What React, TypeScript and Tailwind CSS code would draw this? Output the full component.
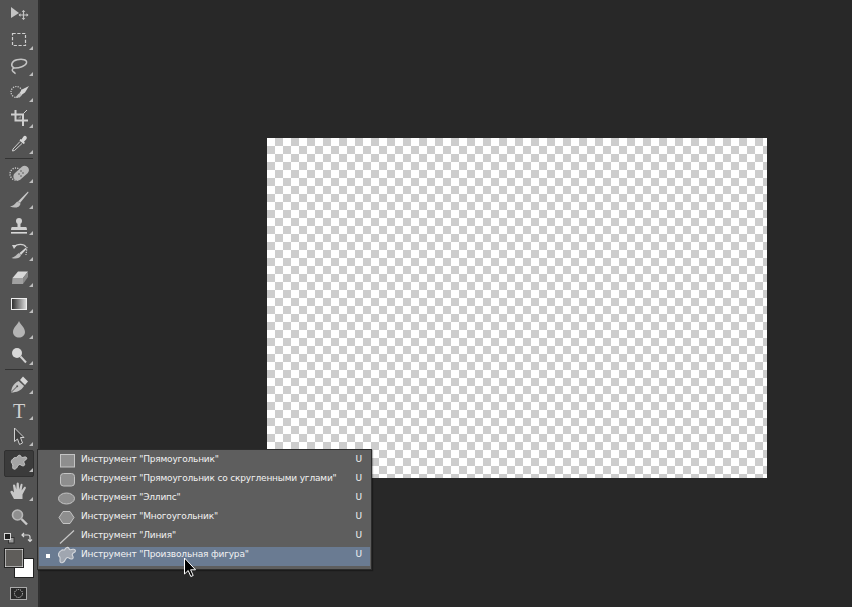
import React from "react";

const C = "#c4c4c4";

const Blob = ({ fill = "#a4a4a4", stroke = "#cccccc" }: { fill?: string; stroke?: string }) => (
  <path
    d="M14 9 C15 8 16.5 9 17 8.5 C17.5 6 20.5 5.5 21 7.5 C21.3 8.8 23 8.5 24.5 8 C27 7.5 27.5 10 25.5 11 C23.5 12 23.5 13 24.5 14.5 C25.5 17 22.5 17.5 21 16 C19.5 15 18.5 15.5 17.5 17.5 C16.5 20 14 21 13 19.5 C12 18 13.5 16.5 12.5 15 C10.5 13.5 11 11 14 9 Z"
    fill={fill}
    stroke={stroke}
    strokeWidth="1"
  />
);

type Tool = { k: string; tri?: boolean; active?: boolean; art: React.ReactNode };

const g1: Tool[] = [
  {
    k: "move",
    art: (
      <>
        <path d="M11 6 L19 12 L11 17 Z" fill={C} />
        <path d="M23.5 9.5 V18.5 M19 14 H28" stroke={C} strokeWidth="1.2" />
        <path d="M23.5 9 l-1.8 2 h3.6 Z M23.5 19 l-1.8 -2 h3.6 Z M18.5 14 l2 -1.8 v3.6 Z M28.5 14 l-2 -1.8 v3.6 Z" fill={C} />
      </>
    ),
  },
  {
    k: "marquee",
    tri: true,
    art: <rect x="12.5" y="6.5" width="13" height="12" fill="none" stroke="#d0d0d0" strokeWidth="1.2" strokeDasharray="3.2 1.6" />,
  },
  {
    k: "lasso",
    tri: true,
    art: (
      <path
        d="M14 15 C10 12.5 11.5 8 17 6.8 C22.5 5.6 27.5 6.8 26.5 10 C25.5 13.2 19 15.2 14.5 15 C12.5 15 11.5 17 13 18.5 C14 19.5 15.5 19.5 15 21"
        fill="none"
        stroke={C}
        strokeWidth="1.5"
      />
    ),
  },
  {
    k: "quick",
    tri: true,
    art: (
      <>
        <circle cx="16.5" cy="13" r="5.5" fill="none" stroke="#d0d0d0" strokeWidth="1.2" strokeDasharray="1.2 1.2" />
        <path d="M29 7 L22 10.5 L19.5 14 L21.5 16 L25 13.5 Z" fill="#d4d4d4" />
        <path d="M19.5 14 C17.5 15 17.5 17 15 18.5 C18 19 21 18.5 21.5 16 Z" fill="#bcbcbc" />
      </>
    ),
  },
  {
    k: "crop",
    tri: true,
    art: (
      <>
        <path d="M11 9.5 H23 V21 M15.5 5 V15.5 H28" fill="none" stroke="#cfcfcf" strokeWidth="2" />
        <path d="M17.5 13.5 L21 10.5 V13.5 Z" fill="#888" />
        <path d="M23.5 8.5 L27 5" stroke="#cfcfcf" strokeWidth="1" />
      </>
    ),
  },
  {
    k: "dropper",
    tri: true,
    art: (
      <>
        <path d="M21.5 8.5 L23.5 5.5 C25 3.8 27.8 5.8 26.5 8 L24 10.8 L25 12 L23.5 13 L19.5 9.5 L20.5 8 Z" fill="#d6d6d6" />
        <path d="M20 10.5 L13 18 L12.5 20 L14.5 19.5 L22 12.5" fill="#555" stroke="#d0d0d0" strokeWidth="1" />
      </>
    ),
  },
];

const g2: Tool[] = [
  {
    k: "heal",
    tri: true,
    art: (
      <>
        <circle cx="16" cy="14" r="6" fill="none" stroke="#d0d0d0" strokeWidth="1.3" strokeDasharray="1.2 1.2" />
        <rect x="-9" y="-4" width="18" height="8.5" rx="4.2" transform="translate(21 13) rotate(-42)" fill="#b8b8b8" />
        <circle cx="21" cy="11" r="0.8" fill="#555" />
        <circle cx="23" cy="13" r="0.8" fill="#555" />
        <circle cx="19" cy="14" r="0.8" fill="#555" />
        <circle cx="21" cy="16" r="0.8" fill="#555" />
      </>
    ),
  },
  {
    k: "brush",
    tri: true,
    art: (
      <>
        <path d="M28 5.5 L18 15.5 L20 17 L28.5 6.5 Z" fill="#c8c8c8" />
        <path d="M17.5 15.5 C15.5 16.5 15 19.5 10 20.5 C14 22.5 20 22 20.5 17.5 Z" fill="#bdbdbd" />
      </>
    ),
  },
  {
    k: "stamp",
    tri: true,
    art: (
      <>
        <circle cx="19" cy="9" r="3" fill="#cfcfcf" />
        <path d="M17.5 10 H20.5 V15 H26 Q27 15 27 18 H11 Q11 15 12 15 H17.5 Z" fill="#cfcfcf" />
        <rect x="11" y="20" width="16" height="1.6" fill="#d8d8d8" />
      </>
    ),
  },
  {
    k: "history",
    tri: true,
    art: (
      <>
        <path d="M14 9 C17 5.5 24 5.5 26 9" fill="none" stroke="#d0d0d0" strokeWidth="1.4" />
        <path d="M12 7 L17 7 L14 11 Z" fill="#d0d0d0" />
        <path d="M27 9 L26 17" stroke="#d0d0d0" strokeWidth="1.2" strokeDasharray="1.2 1.2" />
        <path d="M26 9.5 L19.5 15 L21 17 L26.5 11 Z" fill="#d4d4d4" />
        <path d="M19 15 C17 16 16 18.5 11.5 20 C15 21 20 21 21 17 Z" fill="#bcbcbc" />
      </>
    ),
  },
  {
    k: "eraser",
    tri: true,
    art: (
      <>
        <path d="M18 7.5 H28 L23 14 H12.5 Z" fill="#d8d8d8" />
        <path d="M12.5 14 H23 V20 H12 Z" fill="#a0a0a0" />
        <path d="M23 14 L28 7.5 V13 L23 20 Z" fill="#8a8a8a" />
      </>
    ),
  },
  {
    k: "gradient",
    tri: true,
    art: (
      <>
        <defs>
          <linearGradient id="grad">
            <stop offset="0" stopColor="#2a2a2a" />
            <stop offset="1" stopColor="#e0e0e0" />
          </linearGradient>
        </defs>
        <rect x="11.5" y="8.5" width="15" height="11" fill="url(#grad)" stroke="#eee" strokeWidth="1" />
      </>
    ),
  },
  {
    k: "drop",
    tri: true,
    art: <path d="M19 5 C20.5 9 25 11.5 25 16 C25 19.5 22 21.5 19 21.5 C16 21.5 13 19.5 13 16 C13 11.5 17.5 9 19 5 Z" fill="#b4b4b4" />,
  },
  {
    k: "dodge",
    tri: true,
    art: (
      <>
        <circle cx="17" cy="11" r="5" fill="#d8d8d8" />
        <path d="M20.5 14.5 L26 20.5" stroke="#d0d0d0" strokeWidth="2" />
      </>
    ),
  },
];

const g3: Tool[] = [
  {
    k: "pen",
    tri: true,
    art: (
      <>
        <path d="M11 21.5 C11.5 16.5 13.5 12.5 18.5 10 L24 15 C21.5 19.5 16.5 21.5 11 21.5 Z" fill="#c4c4c4" />
        <path d="M11 21.5 L17 15.5" stroke="#555" strokeWidth="1" />
        <circle cx="17.2" cy="15.3" r="1" fill="#555" />
        <path d="M20 9 L23 5.5 L28 10.5 L25 14 Z" fill="#d6d6d6" />
      </>
    ),
  },
  {
    k: "type",
    tri: true,
    art: (
      <text x="19" y="21" textAnchor="middle" fontFamily="'Liberation Serif', serif" fontSize="20" fill="#d0d0d0">
        T
      </text>
    ),
  },
  {
    k: "path",
    tri: true,
    art: <path d="M14.5 5 L24 14.5 H20.5 L22.5 20 L19.5 21.5 L17.5 16 L14.5 18.5 Z" fill="#3f3f3f" stroke="#d0d0d0" strokeWidth="1" />,
  },
  {
    k: "shape",
    tri: true,
    active: true,
    art: <Blob />,
  },
];

const g4: Tool[] = [
  {
    k: "hand",
    tri: true,
    art: (
      <path
        d="M14 21 L10.5 14.5 C10 13 11.5 12.2 12.5 13 L14 14.5 L13 7.5 C13 6.2 14.8 6 15.2 7.2 L16.3 11.5 L16.6 5.5 C16.8 4 18.6 4 18.8 5.5 L19.2 11.5 L20.6 6.5 C21 5.2 22.8 5.6 22.5 7 L21.6 12.5 L24 9.2 C24.8 8.2 26.3 9 25.8 10.3 L22.5 16.5 V21 Z"
        fill="#c8c8c8"
      />
    ),
  },
  {
    k: "zoom",
    art: (
      <>
        <circle cx="17.5" cy="11" r="5" fill="#8f8f8f" stroke="#b8b8b8" strokeWidth="1.6" />
        <path d="M21.5 15 L27 20.5" stroke="#c8c8c8" strokeWidth="2.4" />
      </>
    ),
  },
];

function ToolRow({ t }: { t: Tool }) {
  return (
    <div className="relative h-[26px] w-full">
      {t.active && <div className="absolute inset-x-[4px] top-[1px] h-[27px] rounded-[2px] border border-[#303030] bg-[#3b3b3b]" />}
      <svg width="38" height="26" viewBox="0 0 38 26" className="relative block overflow-visible">
        {t.art}
        {t.tri && <path d="M33 19 V23 H29 Z" fill="#bdbdbd" />}
      </svg>
    </div>
  );
}

const Sep = () => <div className="mx-[5px] my-[1px] h-px bg-[#333333]" />;

const items: { label: string; icon: React.ReactNode; sel?: boolean }[] = [
  {
    label: 'Инструмент "Прямоугольник"',
    icon: <rect x="2.5" y="2.5" width="14" height="12.5" fill="#8e8e8e" stroke="#c4c4c4" />,
  },
  {
    label: 'Инструмент "Прямоугольник со скругленными углами"',
    icon: <rect x="2.5" y="2.5" width="14" height="12.5" rx="3" fill="#8e8e8e" stroke="#c4c4c4" />,
  },
  {
    label: 'Инструмент "Эллипс"',
    icon: <ellipse cx="8.5" cy="8.5" rx="8" ry="5.5" fill="#8e8e8e" stroke="#c4c4c4" />,
  },
  {
    label: 'Инструмент "Многоугольник"',
    icon: <path d="M5 2.5 H12 L16 8.5 L12 14.5 H5 L1 8.5 Z" fill="#8e8e8e" stroke="#c4c4c4" />,
  },
  {
    label: 'Инструмент "Линия"',
    icon: <path d="M2 15.5 L16 2.5" stroke="#c8c8c8" strokeWidth="1.2" />,
  },
  {
    label: 'Инструмент "Произвольная фигура"',
    sel: true,
    icon: (
      <g transform="translate(-12 -6.5) scale(1.1)">
        <Blob fill="#a0a6b0" stroke="#d4d7dc" />
      </g>
    ),
  },
];

function FlyoutMenu() {
  return (
    <div className="absolute left-[37px] top-[449px] z-10 w-[335px] border border-[#2c2c2c] bg-[#5e5e5e] px-[1px] pt-[2px] pb-[3px] shadow-[1px_1px_1px_rgba(0,0,0,0.3)]">
      <div className="flex flex-col">
        {items.map((it) => (
          <div key={it.label} className={`flex h-[19px] items-center ${it.sel ? "bg-[#6a7b92]" : ""}`}>
            <div className="flex w-[17px] justify-center">
              {it.sel && <div className="mb-[2px] h-[4px] w-[4px] bg-white" />}
            </div>
            <svg width="20" height="19" viewBox="0 0 20 19" className="ml-[2px] block overflow-visible">
              {it.icon}
            </svg>
            <span className="ml-[3px] flex-1 whitespace-nowrap pb-[4px] font-['DejaVu_Sans',sans-serif] text-[9px] leading-none tracking-[-0.18px] text-[#f2f2f2]">
              {it.label}
            </span>
            <span className="mr-[8px] pb-[4px] font-['DejaVu_Sans',sans-serif] text-[9px] leading-none text-[#f2f2f2]">U</span>
          </div>
        ))}
      </div>
    </div>
  );
}

export default function App() {
  return (
    <div className="relative flex h-[607px] w-[852px] overflow-hidden bg-[#282828]">
      <aside className="flex h-full w-[38px] shrink-0 flex-col bg-[#535353] pt-[1px]">
        {g1.map((t) => <ToolRow key={t.k} t={t} />)}
        <Sep />
        {g2.map((t) => <ToolRow key={t.k} t={t} />)}
        <Sep />
        {g3.map((t) => <ToolRow key={t.k} t={t} />)}
        <Sep />
        {g4.map((t) => <ToolRow key={t.k} t={t} />)}
        <svg width="38" height="76" viewBox="0 0 38 76" className="block">
          <rect x="8.5" y="7.5" width="5.5" height="5.5" fill="#9a9a9a" stroke="#333" />
          <rect x="4.5" y="3.5" width="6" height="6" fill="#222" stroke="#d8d8d8" />
          <path d="M24 3 L22 5 L24 7 M22.5 5 H28 Q30 5 30 7 V11 M28 9.5 L30 11.5 L32 9.5" fill="none" stroke="#d8d8d8" strokeWidth="1.2" />
          <rect x="14.5" y="28.5" width="19" height="19" fill="#fff" stroke="#222" />
          <rect x="5" y="19" width="18" height="18" fill="#5f5d5a" stroke="#fff" strokeWidth="1" />
          <rect x="4.5" y="18.5" width="19" height="19" fill="none" stroke="#222" />
          <rect x="10.5" y="57.5" width="16" height="12" fill="#2a2a2a" stroke="#aaa" />
          <circle cx="18.5" cy="63.5" r="4" fill="none" stroke="#ddd" strokeWidth="1" strokeDasharray="1 1" />
        </svg>
      </aside>
      <div className="w-[2px] shrink-0 bg-[#2f2f2f]" />
      <main className="flex-1 pl-[227px] pt-[138px]">
        <div className="h-[340px] w-[500px] bg-[conic-gradient(#cdcdcd_25%,#ffffff_0_50%,#cdcdcd_0_75%,#ffffff_0)] bg-[length:16px_16px]" />
      </main>
      <FlyoutMenu />
      <svg width="14" height="21" viewBox="0 0 14 21" className="absolute left-[183px] top-[557px] z-20">
        <path d="M1.5 1 V17 L5.2 13.5 L7.8 19.5 L10.2 18.5 L7.6 12.8 H12.5 Z" fill="#000" stroke="#fff" strokeWidth="1" />
      </svg>
    </div>
  );
}
